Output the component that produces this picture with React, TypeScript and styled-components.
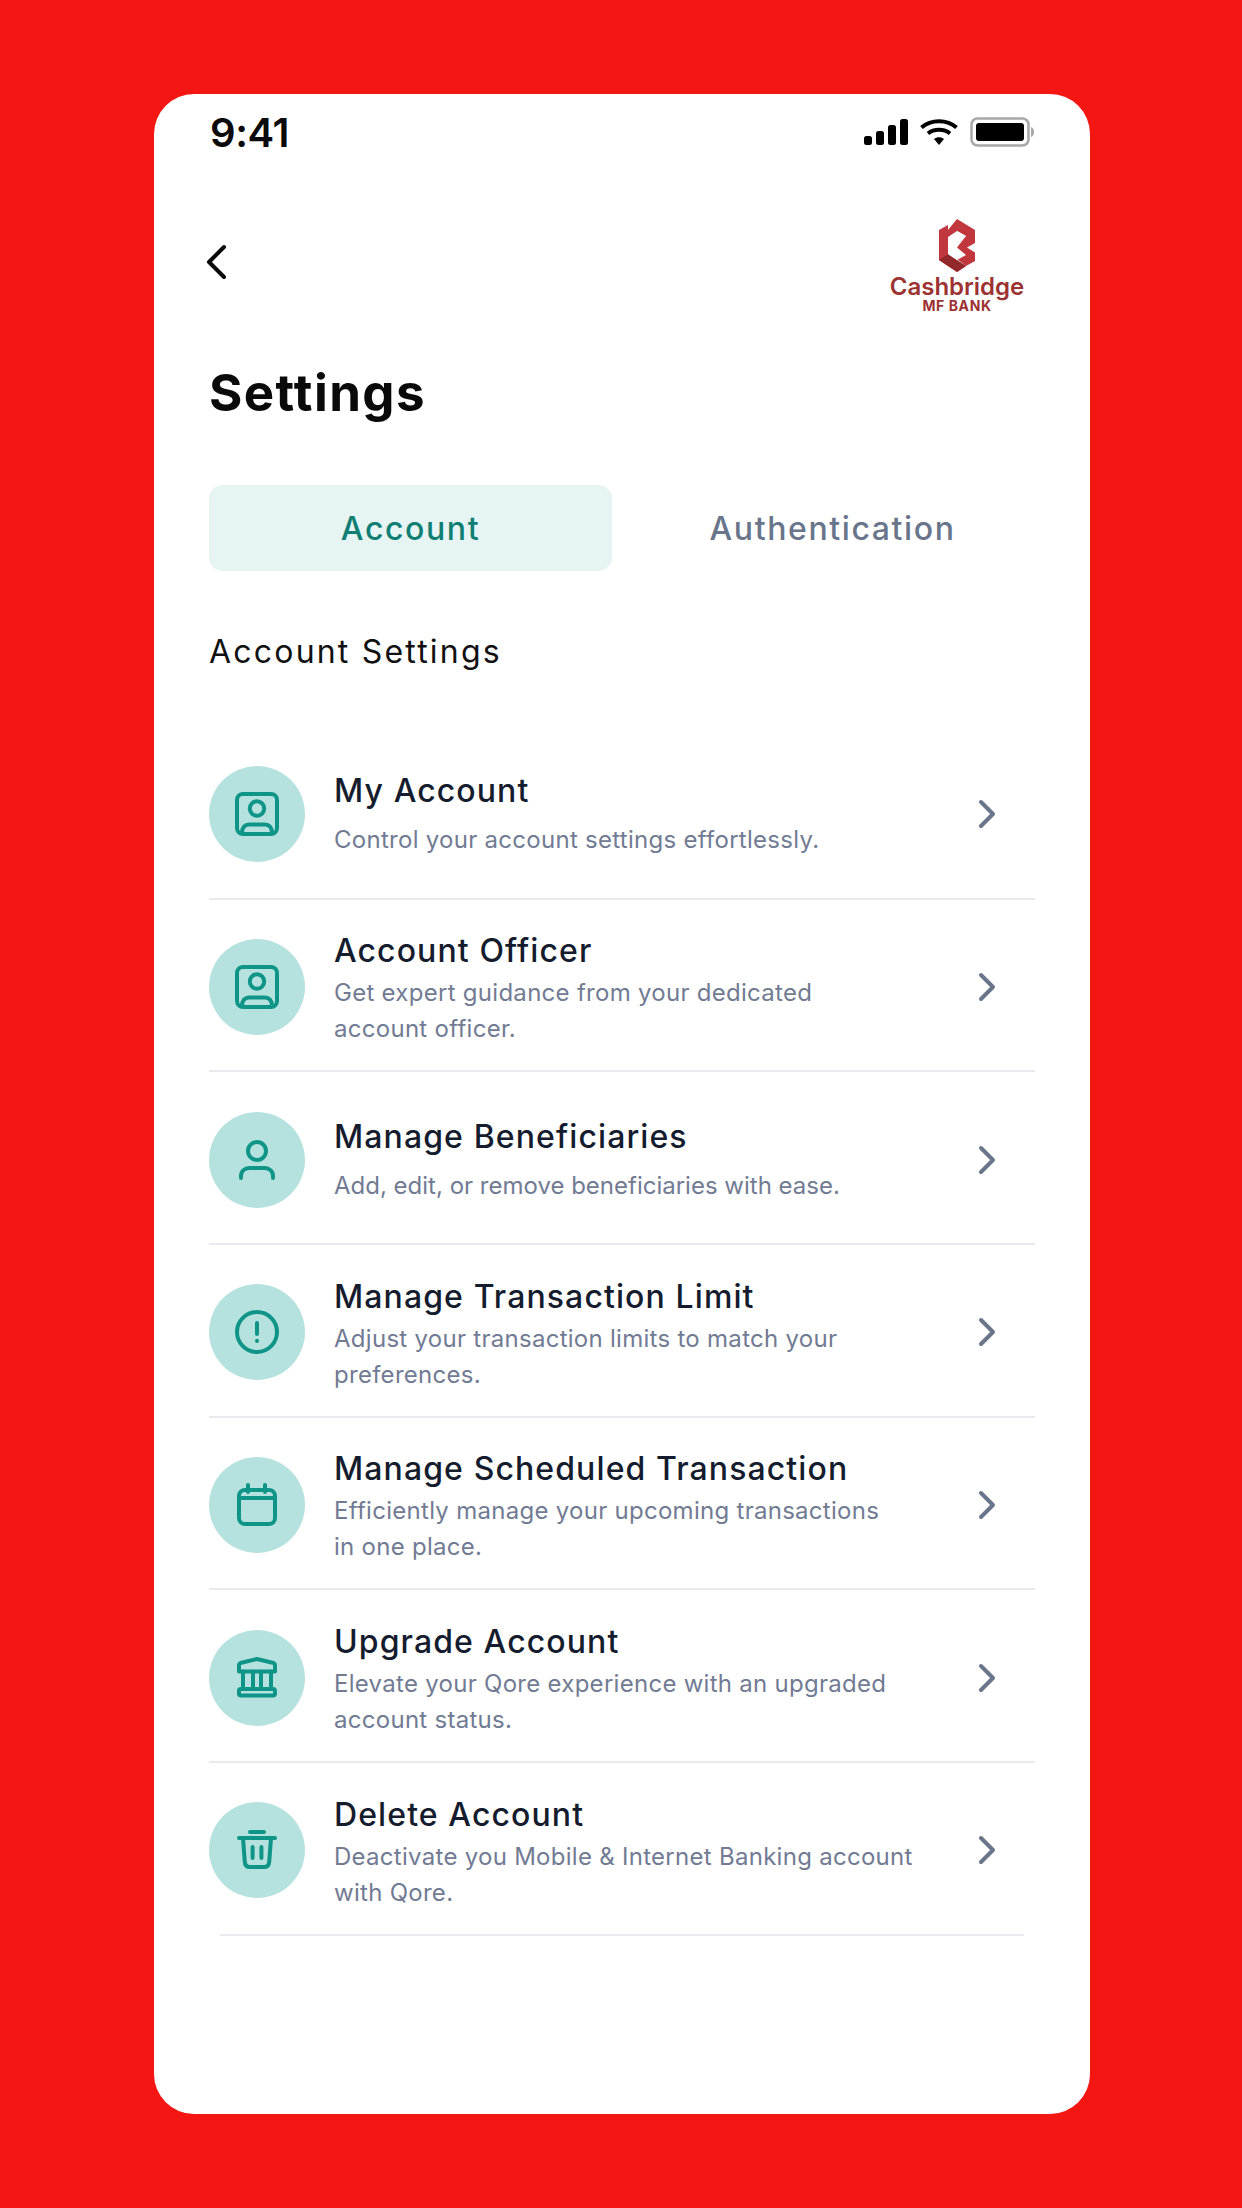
import React from "react";
import styled, { createGlobalStyle } from "styled-components";

const Global = createGlobalStyle`
  html, body { margin: 0; padding: 0; background: #f31613; }
  * { box-sizing: border-box; }
`;
const Page = styled.div`
  width: 1242px; height: 2208px; padding: 94px 152px 94px 154px; background: #f31613;
  font-family: Inter, "Liberation Sans", sans-serif;
`;
const Card = styled.main`
  height: 2020px; background: #fff; border-radius: 40px; padding: 0 55px;
  display: flex; flex-direction: column;
`;
const StatusBar = styled.header`
  height: 76px; display: flex; align-items: center; justify-content: space-between; padding-left: 1px;
`;
const Time = styled.span`font-size: 40px; font-weight: 600; color: #0a0a0a; letter-spacing: -0.4px;`;
const StatusIcons = styled.div`display: flex; align-items: center; gap: 12px;`;
const TopBar = styled.div`
  display: flex; justify-content: space-between; align-items: flex-start; margin-top: 49px; height: 95px; padding-right: 11px;
`;
const Back = styled.svg`width: 24px; height: 36px; margin: 25px 0 0 -6px;`;
const Logo = styled.div`display: flex; flex-direction: column; align-items: center; width: 134px;`;
const LogoName = styled.span`font-size: 24px; font-weight: 600; color: #9c3232; line-height: 27px; margin-top: 1px;`;
const LogoSub = styled.span`font-size: 14px; font-weight: 700; color: #9c3232; line-height: 12px; letter-spacing: 0.6px;`;
const Title = styled.h1`margin: 49px 0 0; font-size: 51px; line-height: 60px; font-weight: 700; color: #0a0a0a; letter-spacing: 1.4px;`;
const Tabs = styled.div`display: grid; grid-template-columns: 403px 1fr; margin-top: 62px;`;
const Tab = styled.div<{ $active?: boolean }>`
  height: 86px; border-radius: 14px; display: flex; align-items: center; justify-content: center;
  font-size: 32px; font-weight: 500; letter-spacing: 1.6px;
  background: ${p => (p.$active ? "#e6f4f3" : "transparent")};
  color: ${p => (p.$active ? "#0f7f73" : "#69758a")};
  padding-left: ${p => (p.$active ? "0" : "18px")};
`;
const Section = styled.h2`margin: 61px 0 0; font-size: 32px; line-height: 40px; font-weight: 400; color: #111; letter-spacing: 2.2px;`;
const List = styled.div`margin-top: 55px; display: flex; flex-direction: column;`;
const Row = styled.div<{ $last?: boolean }>`
  position: relative; height: 172.67px; display: flex; align-items: center; gap: 29px; padding-top: 2px;
  &::after {
    content: ""; position: absolute; bottom: 0; height: 2px; background: #e8eaee;
    left: ${p => (p.$last ? "11px" : "0")}; right: ${p => (p.$last ? "11px" : "0")};
  }
`;
const Circle = styled.div`
  width: 96px; height: 96px; border-radius: 50%; background: #b5e2df; flex: none;
  display: flex; align-items: center; justify-content: center;
`;
const RowText = styled.div<{ $two: boolean }>`
  flex: 1; display: flex; flex-direction: column;
  gap: ${p => (p.$two ? 4 : 11)}px; margin-top: ${p => (p.$two ? 5 : 1)}px;
`;
const RowTitle = styled.div`font-size: 32px; line-height: 40px; font-weight: 500; color: #141c2e; letter-spacing: 1.1px;`;
const RowDesc = styled.div<{ $tight?: boolean }>`
  font-size: 24px; line-height: 36px; font-weight: 400; color: #717b93;
  letter-spacing: ${p => (p.$tight ? "0" : "0.28px")};
`;
const Chevron = styled.svg`width: 24px; height: 36px; flex: none; margin-right: 36px;`;

const teal = { fill: "none", stroke: "#0f9488", strokeWidth: 2, strokeLinecap: "round" as const, strokeLinejoin: "round" as const };

const Portrait = () => (
  <svg width="48" height="48" viewBox="0 0 24 24" {...teal}>
    <rect x="2" y="2" width="20" height="20" rx="3" />
    <circle cx="12" cy="9.250" r="3.600" />
    <path d="M4.500 21.500c0-2.800 1.500-4.300 3.500-4.300h8c2 0 3.500 1.500 3.500 4.300" />
  </svg>
);
const Person = () => (
  <svg width="48" height="48" viewBox="0 0 24 24" {...teal}>
    <circle cx="12" cy="7.500" r="4.500" />
    <path d="M4 21v-1c0-2.500 2-4 4-4h8c2 0 4 1.500 4 4v1" />
  </svg>
);
const Alert = () => (
  <svg width="48" height="48" viewBox="0 0 24 24" {...teal}>
    <circle cx="12" cy="12" r="10" />
    <path d="M12 7.500v5.500" />
    <path d="M12 16.400v.1" />
  </svg>
);
const Calendar = () => (
  <svg width="48" height="48" viewBox="0 0 24 24" {...teal}>
    <rect x="3" y="4.500" width="18" height="17" rx="3" />
    <path d="M3 8.500h18M7.500 2v3.500M16 2v3.500" />
  </svg>
);
const Bank = () => (
  <svg width="48" height="48" viewBox="0 0 24 24" {...teal}>
    <path d="M3 8.700V5.500c0-.5.2-.8.7-1L12 2.500l8.300 2c.5.2.7.5.7 1v3.200z" />
    <rect x="3" y="17.500" width="18" height="3.200" rx="1" />
    <path d="M5 8.700v8.800M10 8.700v8.800M14 8.700v8.800M19 8.700v8.800" />
  </svg>
);
const Trash = () => (
  <svg width="48" height="48" viewBox="0 0 24 24" {...teal}>
    <path d="M8.500 3h7M3 6h18M5 6l.9 12c.1 1.500 1 2.500 2.500 2.500h7.200c1.500 0 2.400-1 2.500-2.500L19 6M9.800 10.500V16M14.200 10.500V16" />
  </svg>
);

const rows = [
  { t: "My Account", d: ["Control your account settings effortlessly."], i: <Portrait /> },
  { t: "Account Officer", d: ["Get expert guidance from your dedicated", "account officer."], i: <Portrait /> },
  { t: "Manage Beneficiaries", d: ["Add, edit, or remove beneficiaries with ease."], i: <Person />, tight: true },
  { t: "Manage Transaction Limit", d: ["Adjust your transaction limits to match your", "preferences."], i: <Alert /> },
  { t: "Manage Scheduled Transaction", d: ["Efficiently manage your upcoming transactions", "in one place."], i: <Calendar /> },
  { t: "Upgrade Account", d: ["Elevate your Qore experience with an upgraded", "account status."], i: <Bank /> },
  { t: "Delete Account", d: ["Deactivate you Mobile & Internet Banking account", "with Qore."], i: <Trash /> },
];

export default function App() {
  return (
    <Page>
      <Global />
      <Card>
        <StatusBar>
          <Time>9:41</Time>
          <StatusIcons>
            <svg width="44" height="26" viewBox="0 0 44 26">
              <rect x="0" y="17" width="8" height="9" rx="2.500" fill="#000" />
              <rect x="12" y="12" width="8" height="14" rx="2.500" fill="#000" />
              <rect x="24" y="6" width="8" height="20" rx="2.500" fill="#000" />
              <rect x="36" y="0" width="8" height="26" rx="2.500" fill="#000" />
            </svg>
            <svg width="38" height="28" viewBox="0 0 38 28" fill="none" stroke="#000" strokeWidth="4">
              <path d="M1.500 9.500C11 1 27 1 36.500 9.500" />
              <path d="M8 15.500c6-5 16-5 22 0" />
              <path d="M14 21L19 27 24 21C21 18.500 17 18.500 14 21z" fill="#000" stroke="none" />
            </svg>
            <svg width="65" height="30" viewBox="0 0 65 30">
              <rect x="1.500" y="1.500" width="57" height="27" rx="6" fill="none" stroke="#a8a8a8" strokeWidth="2.500" />
              <rect x="6" y="6" width="48" height="18" rx="3" fill="#000" />
              <path d="M61 10c2 .5 3 2.500 3 5s-1 4.500-3 5z" fill="#a8a8a8" />
            </svg>
          </StatusIcons>
        </StatusBar>
        <TopBar>
          <Back viewBox="0 0 24 36" fill="none" stroke="#0a0a0a" strokeWidth="4" strokeLinecap="round" strokeLinejoin="round">
            <path d="M21 3L6 18l15 15" />
          </Back>
          <Logo>
            <svg width="36" height="53" viewBox="0 0 36 53">
              <path d="M18 0L36 11V24L28 28.500L36 33.500V42L27 47L9 33V11z" fill="#c0383e" />
              <path d="M0 11L9 6V36L27 47L18 53L0 41z" fill="#c0383e" />
              <path d="M0 41L9 35L27 47L18 53z" fill="#93282a" />
              <path d="M27 17L18 12L9 18V35L18 41L27 36L18 28.500z" fill="#fff" />
              <path d="M18 12L27 17L20 22z" fill="#fff" />
            </svg>
            <LogoName>Cashbridge</LogoName>
            <LogoSub>MF BANK</LogoSub>
          </Logo>
        </TopBar>
        <Title>Settings</Title>
        <Tabs>
          <Tab $active>Account</Tab>
          <Tab>Authentication</Tab>
        </Tabs>
        <Section>Account Settings</Section>
        <List>
          {rows.map((r, i) => (
            <Row key={r.t} $last={i === rows.length - 1}>
              <Circle>{r.i}</Circle>
              <RowText $two={r.d.length > 1}>
                <RowTitle>{r.t}</RowTitle>
                <RowDesc $tight={r.tight}>{r.d.map(l => <div key={l}>{l}</div>)}</RowDesc>
              </RowText>
              <Chevron viewBox="0 0 24 36" fill="none" stroke="#69758a" strokeWidth="4" strokeLinecap="round" strokeLinejoin="round">
                <path d="M6 6l12 12L6 30" />
              </Chevron>
            </Row>
          ))}
        </List>
      </Card>
    </Page>
  );
}
